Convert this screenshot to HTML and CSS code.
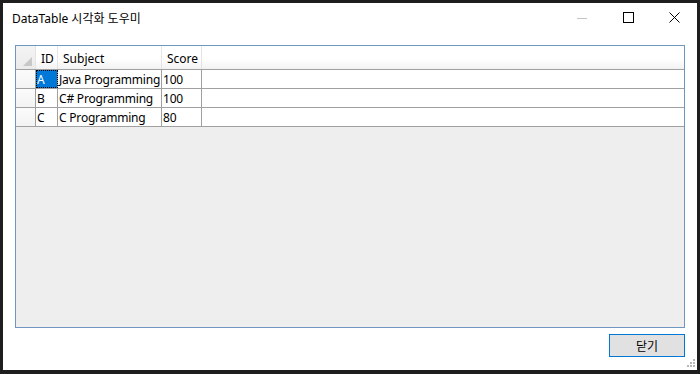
FILE: index.html
```html
<!DOCTYPE html>
<html lang="ko">
<head>
    <meta charset="UTF-8">
    <title>DataTable 시각화 도우미</title>
    <link rel="stylesheet" href="styles.css">
</head>
<body>
    <div class="window">
        <div class="titlebar">
            <div class="title">DataTable 시각화 도우미</div>
            <div class="controls">
                <div class="ctl ctl-min">
                    <svg width="10" height="10" viewBox="0 0 10 10"><line x1="0" y1="5.5" x2="10" y2="5.5" stroke="#c4c4c4" stroke-width="1"/></svg>
                </div>
                <div class="ctl">
                    <svg width="11" height="11" viewBox="0 0 11 11"><rect x="0.5" y="0.5" width="10" height="10" fill="none" stroke="#000" stroke-width="1"/></svg>
                </div>
                <div class="ctl">
                    <svg width="11" height="11" viewBox="0 0 11 11"><path d="M0.5 0.5 L10.5 10.5 M10.5 0.5 L0.5 10.5" stroke="#000" stroke-width="1"/></svg>
                </div>
            </div>
        </div>
        <div class="content">
            <div class="grid">
                <div class="row header">
                    <div class="cell rowhead corner"><span class="tri"></span></div>
                    <div class="cell c-id">ID</div>
                    <div class="cell c-subject">Subject</div>
                    <div class="cell c-score">Score</div>
                    <div class="cell c-fill"></div>
                </div>
                <div class="row">
                    <div class="cell rowhead"></div>
                    <div class="cell c-id selected">A</div>
                    <div class="cell c-subject">Java Programming</div>
                    <div class="cell c-score">100</div>
                    <div class="cell c-fill"></div>
                </div>
                <div class="row">
                    <div class="cell rowhead"></div>
                    <div class="cell c-id">B</div>
                    <div class="cell c-subject">C# Programming</div>
                    <div class="cell c-score">100</div>
                    <div class="cell c-fill"></div>
                </div>
                <div class="row">
                    <div class="cell rowhead"></div>
                    <div class="cell c-id">C</div>
                    <div class="cell c-subject">C Programming</div>
                    <div class="cell c-score">80</div>
                    <div class="cell c-fill"></div>
                </div>
            </div>
            <div class="actions">
                <button class="btn-close">닫기</button>
            </div>
        </div>
        <svg class="grip" width="10" height="10" viewBox="0 0 10 10">
            <rect x="8" y="0" width="2" height="2" fill="#b8b8b8"/>
            <rect x="5" y="3" width="2" height="2" fill="#b8b8b8"/>
            <rect x="8" y="3" width="2" height="2" fill="#b8b8b8"/>
            <rect x="2" y="6" width="2" height="2" fill="#b8b8b8"/>
            <rect x="5" y="6" width="2" height="2" fill="#b8b8b8"/>
            <rect x="8" y="6" width="2" height="2" fill="#b8b8b8"/>
        </svg>
    </div>
</body>
</html>
```

FILE: styles.css
```css
body {
    margin: 0;
    padding: 3px 3px 4px 3px;
    background-color: #1e1e1e;
    font-family: 'Noto Sans', 'Noto Sans CJK KR', sans-serif;
    font-size: 12px;
    color: #000;
}

.window {
    position: relative;
    width: 694px;
    height: 367px;
    background-color: #fff;
    display: flex;
    flex-direction: column;
}

.titlebar {
    height: 30px;
    display: flex;
    align-items: center;
    justify-content: space-between;
}

.title {
    padding-left: 9px;
    font-size: 12px;
}

.controls {
    display: flex;
    height: 100%;
}

.ctl {
    width: 46px;
    display: flex;
    align-items: center;
    justify-content: center;
}

.content {
    flex: 1;
    padding: 13px 12px 13px 12px;
    display: flex;
    flex-direction: column;
}

.grid {
    height: 283px;
    box-sizing: border-box;
    border: 1px solid #7097c0;
    background-color: #eeeeee;
}

.row {
    display: flex;
    height: 18px;
    background-color: #fff;
    border-bottom: 1px solid #a0a0a0;
}

.row.header {
    height: 23px;
    background: linear-gradient(#ffffff 55%, #f2f2f2);
}

.cell {
    box-sizing: border-box;
    border-right: 1px solid #a0a0a0;
    padding: 2px 0 0 1px;
    line-height: 16px;
    letter-spacing: -0.2px;
    white-space: nowrap;
    overflow: hidden;
}

.header .cell {
    border-right: 1px solid #e4e4e4;
    padding: 2px 0 0 5px;
    line-height: 22px;
    letter-spacing: 0;
}

.rowhead {
    width: 20px;
    background: linear-gradient(#fbfbfb, #f3f3f3);
    border-right-color: #a0a0a0;
}

.header .corner {
    position: relative;
    background: linear-gradient(#f4f4f4, #ebebeb);
    border-right-color: #e4e4e4;
}

.tri {
    position: absolute;
    right: 3px;
    bottom: 3px;
    width: 0;
    height: 0;
    border-left: 9px solid transparent;
    border-bottom: 9px solid #c8c8c8;
}

.c-id {
    width: 22px;
}

.c-subject {
    width: 104px;
}

.c-score {
    width: 40px;
}

.c-fill {
    flex: 1;
    border-right: none;
}

.header .c-fill {
    border-right: none;
}

.selected {
    background-color: #0078d7;
    color: #fff;
    outline: 1px dotted #000;
    outline-offset: -1px;
}

.actions {
    display: flex;
    justify-content: flex-end;
    margin-top: 6px;
}

.btn-close {
    width: 76px;
    height: 23px;
    box-sizing: border-box;
    border: 1px solid #0078d7;
    background-color: #e1e1e1;
    font-family: 'Noto Sans CJK KR', 'Noto Sans', sans-serif;
    font-size: 12px;
    color: #000;
    padding: 0;
}

.grip {
    position: absolute;
    right: 2px;
    bottom: 1px;
}
```
